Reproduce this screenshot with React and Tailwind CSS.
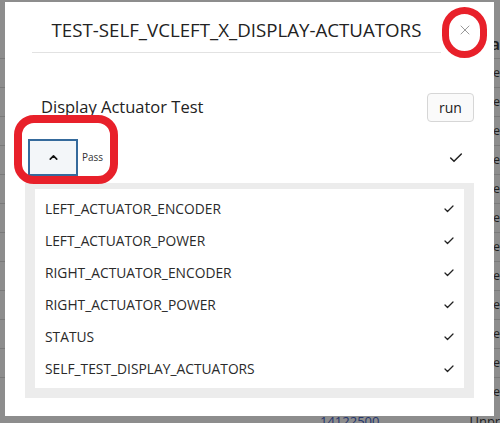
import { X, ChevronUp, Check } from 'lucide-react';

const checks = [
  'LEFT_ACTUATOR_ENCODER',
  'LEFT_ACTUATOR_POWER',
  'RIGHT_ACTUATOR_ENCODER',
  'RIGHT_ACTUATOR_POWER',
  'STATUS',
  'SELF_TEST_DISPLAY_ACTUATORS',
];

const bgRows = Array.from({ length: 12 });

export default function App() {
  return (
    <div className="relative w-[500px] h-[423px] overflow-hidden bg-[#8d8d8d] font-['Open_Sans',sans-serif]">
      {/* dimmed page behind the dialog */}
      <div className="flex flex-col pt-[30px] text-[#1e1e1e]">
        <div className="h-[28px] flex items-center justify-end text-[17px] font-semibold">
          <span>a</span>
        </div>
        {bgRows.map((_, i) => (
          <div key={i} className="h-[29px] flex items-center justify-end border-t border-[#7a7a7a] text-[12px]">
            <span>Se</span>
          </div>
        ))}
      </div>
      <div className="absolute left-0 top-[414px] w-full flex text-[13px] leading-[14px]">
        <span className="ml-[320px] text-[#24356e]">14122500</span>
        <span className="ml-[90px] text-[#1e1e1e]">Unproc</span>
      </div>

      {/* dialog */}
      <div className="absolute left-[5px] top-[2px] w-[489px] h-[414px] bg-white flex flex-col">
        <div className="flex items-start pl-[27px] pt-[14px]">
          <div className="w-[409px] border-b border-[#e2e2e2] pb-[8px] text-center text-[18.7px] leading-[28px] text-[#222]">
            TEST-SELF_VCLEFT_X_DISPLAY-ACTUATORS
          </div>
          <button className="ml-[16px] mt-[6px] text-[#9a9a9a]">
            <X size={16} strokeWidth={1.5} />
          </button>
        </div>

        <div className="flex items-center justify-between pl-[36px] pr-[20px] mt-[40px]">
          <span className="text-[16.5px] text-[#222]">Display Actuator Test</span>
          <button className="w-[47px] h-[29px] border border-[#d6d6d6] rounded-[4px] bg-[#fafafa] text-[14px] text-[#222]">
            run
          </button>
        </div>

        <div className="flex items-center pl-[23px] pr-[30px] mt-[17px]">
          <button className="w-[50px] h-[37px] border-2 border-[#356a9c] bg-[#f3f6f9] flex items-center justify-center text-[#111]">
            <ChevronUp size={13} strokeWidth={3} />
          </button>
          <span className="ml-[4px] text-[10px] text-[#333]">Pass</span>
          <Check size={16} strokeWidth={2.25} className="ml-auto text-[#222]" />
        </div>

        <div className="ml-[20px] mr-[20px] mt-[7px] border-t-[6px] border-x-[10px] border-b-[10px] border-[#ececec] flex flex-col pt-[4px] pb-[3px]">
          {checks.map((c) => (
            <div key={c} className="h-[32px] flex items-center justify-between pl-[10px] pr-[9px]">
              <span className="text-[13.8px] text-[#2a2a2a]">{c}</span>
              <Check size={12} strokeWidth={2.5} className="text-[#222]" />
            </div>
          ))}
        </div>
      </div>

      {/* red annotations */}
      <div className="absolute left-[14px] top-[115px] w-[104px] h-[69px] border-[8px] border-[#e8202a] rounded-[20px]" />
      <div className="absolute left-[442px] top-[7px] w-[45px] h-[51px] border-[7px] border-[#e8202a] rounded-full" />
    </div>
  );
}
